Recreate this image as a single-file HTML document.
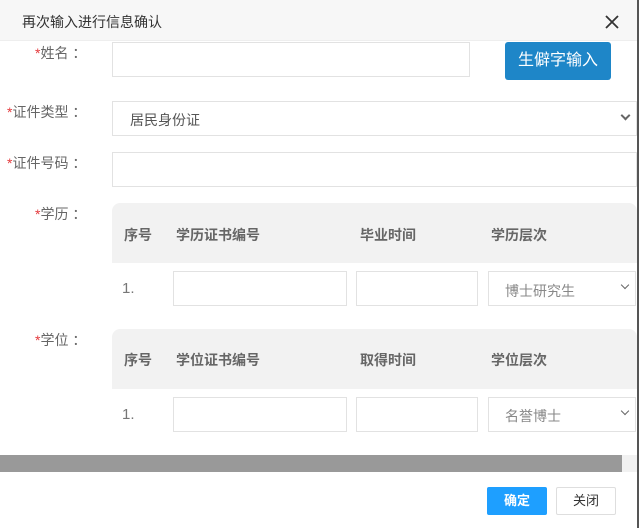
<!DOCTYPE html>
<html><head><meta charset="utf-8"><style>
*{box-sizing:border-box;margin:0;padding:0}
body{width:639px;height:528px;overflow:hidden;background:#fff;font-family:"Liberation Sans","Noto Sans CJK SC",sans-serif;font-size:14px;color:#555;position:relative}
.a{position:absolute}
.inp{position:absolute;border:1px solid #e2e2e2;background:#fff}
.lbl{position:absolute;color:#666;font-size:14px}
.lbl b{color:#e4393c;font-weight:normal}
.th{position:absolute;font-size:14px;color:#666;font-weight:bold}
.chev{position:absolute;width:7px;height:7px;border-right:2px solid #666;border-bottom:2px solid #666;transform:rotate(45deg)}
</style></head><body>
<div class="a" style="left:0;top:0;width:637px;height:41px;background:#f7f7f7;border-bottom:1px solid #eee"></div>
<div class="a" style="left:22px;top:12px;font-size:14px;color:#333">再次输入进行信息确认</div>
<svg class="a" style="left:605px;top:15px" width="14" height="14"><path d="M1 1L13 13M13 1L1 13" stroke="#333" stroke-width="1.8"/></svg>
<div class="a" style="left:637px;top:0;width:2px;height:528px;background:#555"></div>

<div class="lbl" style="left:35px;top:43px"><b>*</b>姓名 ：</div>
<div class="inp" style="left:112px;top:42px;width:358px;height:35px"></div>
<div class="a" style="left:505px;top:42px;width:106px;height:38px;background:#1e86c8;border-radius:3px;color:#fff;font-size:16px;text-align:center;line-height:38px">生僻字输入</div>

<div class="lbl" style="left:7px;top:102px"><b>*</b>证件类型 ：</div>
<div class="inp" style="left:112px;top:101px;width:525px;height:35px"><span class="a" style="left:17px;top:8px;color:#555">居民身份证</span></div>
<div class="chev" style="left:622px;top:112px"></div>

<div class="lbl" style="left:7px;top:153px"><b>*</b>证件号码 ：</div>
<div class="inp" style="left:112px;top:152px;width:525px;height:35px"></div>

<div class="lbl" style="left:35px;top:204px"><b>*</b>学历 ：</div>
<div class="a" style="left:112px;top:203px;width:525px;height:60px;background:#f2f2f2;border-top-left-radius:8px;border-top-right-radius:8px"></div>
<div class="th" style="left:124px;top:225px">序号</div>
<div class="th" style="left:176px;top:225px">学历证书编号</div>
<div class="th" style="left:360px;top:225px">毕业时间</div>
<div class="th" style="left:491px;top:225px">学历层次</div>
<div class="a" style="left:122px;top:280px;color:#777;font-size:15px">1.</div>
<div class="inp" style="left:173px;top:271px;width:174px;height:35px"></div>
<div class="inp" style="left:356px;top:271px;width:122px;height:35px"></div>
<div class="inp" style="left:488px;top:271px;width:148px;height:35px"><span class="a" style="left:16px;top:9px;color:#888">博士研究生</span></div>
<div class="chev" style="left:622px;top:282px;width:6px;height:6px;border-width:1.5px"></div>

<div class="lbl" style="left:35px;top:330px"><b>*</b>学位 ：</div>
<div class="a" style="left:112px;top:329px;width:525px;height:60px;background:#f2f2f2;border-top-left-radius:8px;border-top-right-radius:8px"></div>
<div class="th" style="left:124px;top:350px">序号</div>
<div class="th" style="left:176px;top:350px">学位证书编号</div>
<div class="th" style="left:360px;top:350px">取得时间</div>
<div class="th" style="left:491px;top:350px">学位层次</div>
<div class="a" style="left:122px;top:406px;color:#777;font-size:15px">1.</div>
<div class="inp" style="left:173px;top:397px;width:174px;height:35px"></div>
<div class="inp" style="left:356px;top:397px;width:122px;height:35px"></div>
<div class="inp" style="left:488px;top:397px;width:148px;height:35px"><span class="a" style="left:16px;top:8px;color:#888">名誉博士</span></div>
<div class="chev" style="left:622px;top:408px;width:6px;height:6px;border-width:1.5px"></div>

<div class="a" style="left:0;top:455px;width:637px;height:17px;background:#f1f1f1"></div>
<div class="a" style="left:0;top:455px;width:622px;height:17px;background:#999"></div>

<div class="a" style="left:487px;top:487px;width:60px;height:28px;background:#1e9fff;border-radius:2px;color:#fff;font-size:13px;font-weight:bold;text-align:center;line-height:28px">确定</div>
<div class="a" style="left:556px;top:487px;width:60px;height:28px;border:1px solid #dedede;border-radius:2px;color:#333;font-size:13px;text-align:center;line-height:26px">关闭</div>
</body></html>
